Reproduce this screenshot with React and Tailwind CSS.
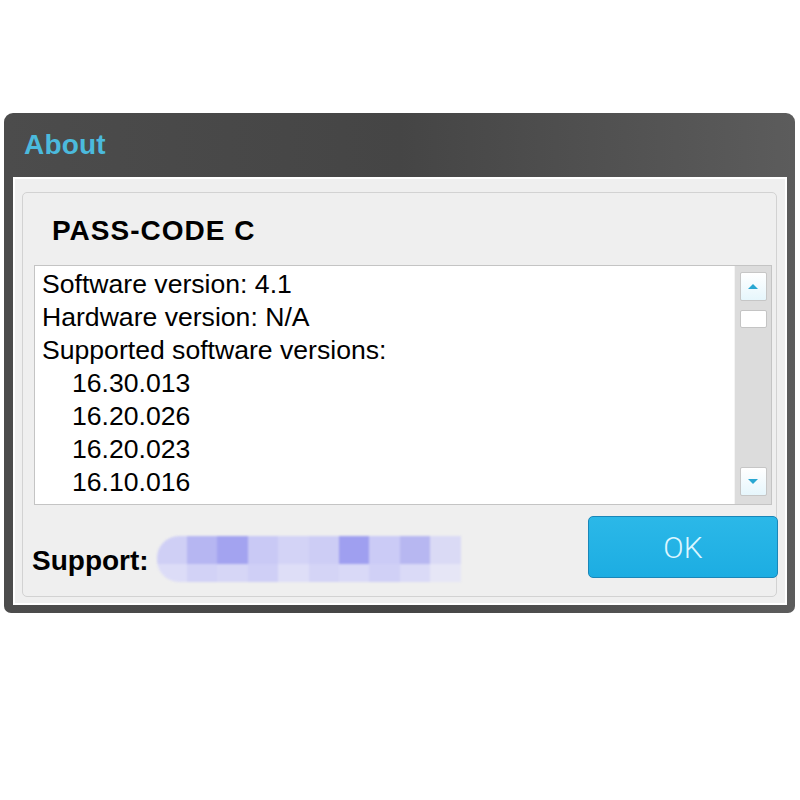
import React from "react";

// 列表里的文字行
const LINES = [
  { text: "Software version: 4.1", indent: false },
  { text: "Hardware version: N/A", indent: false },
  { text: "Supported software versions:", indent: false },
  { text: "16.30.013", indent: true },
  { text: "16.20.026", indent: true },
  { text: "16.20.023", indent: true },
  { text: "16.10.016", indent: true },
];

// 打了马赛克的联系方式
const BLUR_TOP = ["#cfcff5", "#b6b6f2", "#a3a3f0", "#c9c9f5", "#d3d3f6", "#cdcdf5", "#9f9ff0", "#cbcbf6", "#b7b7f1", "#dadaf5"];
const BLUR_BOTTOM = ["#dcdcf7", "#d2d2f6", "#d6d6f6", "#cfcff6", "#dedef7", "#d4d4f6", "#d9d9f7", "#d0d0f6", "#dadaf7", "#e6e6f6"];

const SANS = "font-['Liberation_Sans',Arial,sans-serif]";

function ScrollButton({ down }) {
  return (
    <div className="mx-auto w-[27px] h-[29px] bg-gradient-to-b from-white to-[#e6f6fc] border border-[#c6c6c6] rounded-[2px] flex items-center justify-center">
      <svg width="12" height="7" viewBox="0 0 12 7">
        {down ? (
          <path d="M1 1 L11 1 L6 6 Z" fill="#29a7d2" />
        ) : (
          <path d="M1 6 L11 6 L6 1 Z" fill="#29a7d2" />
        )}
      </svg>
    </div>
  );
}

export default function App() {
  return (
    <div className={`min-h-[800px] bg-white pt-[113px] pl-[4px] ${SANS}`}>
      {/* 窗口外框 */}
      <div className="w-[791px] rounded-t-[9px] rounded-b-[7px] bg-gradient-to-r from-[#4c4c4c] via-[#454545] to-[#5c5c5c] pl-[9px] pr-[8px] pb-[8px]">
        {/* 标题栏 */}
        <div className="h-[64px] flex items-center pl-[11px]">
          <span className="text-[28px] font-bold text-[#4bbadd] tracking-[0.2px]">About</span>
        </div>

        {/* 内容区 */}
        <div className="h-[428px] bg-[#efefef] border-2 border-white pl-[7px] pr-[8px] pt-[13px] pb-[6px]">
          <div className="h-full border border-[#d2d2d2] rounded-[5px] flex flex-col">
            {/* 标题 */}
            <div className="h-[72px] flex items-center pl-[29px]">
              <span className="text-[28px] font-bold text-black tracking-[1px] pt-[4px]">PASS-CODE C</span>
            </div>

            {/* 信息列表 */}
            <div className="ml-[11px] mr-[4px] h-[240px] bg-white border border-[#c4c4c4] flex">
              <div className="flex-1 pl-[7px] pt-[2px]">
                {LINES.map((l) => (
                  <div
                    key={l.text}
                    className={`text-[26.6px] leading-[33px] text-black ${l.indent ? "pl-[30px]" : ""}`}
                  >
                    {l.text}
                  </div>
                ))}
              </div>
              {/* 滚动条 */}
              <div className="w-[37px] bg-[#dcdcdc] border-l border-[#f4f4f4] flex flex-col pt-[6px] pb-[8px]">
                <ScrollButton />
                <div className="mx-auto mt-[9px] w-[27px] h-[18px] bg-white border border-[#c4c4c4] rounded-[2px]" />
                <div className="flex-1" />
                <ScrollButton down />
              </div>
            </div>

            {/* 底部 */}
            <div className="flex-1 flex items-start pl-[9px]">
              <span className="mt-[35px] text-[28px] font-bold text-black">Support:</span>
              <div className="mt-[31px] ml-[8px] w-[304px] h-[46px] rounded-l-[22px] overflow-hidden flex flex-col blur-[1px]">
                <div className="h-[28px] flex">
                  {BLUR_TOP.map((c, i) => (
                    <div key={i} className="flex-1" style={{ backgroundColor: c }} />
                  ))}
                </div>
                <div className="flex-1 flex">
                  {BLUR_BOTTOM.map((c, i) => (
                    <div key={i} className="flex-1" style={{ backgroundColor: c }} />
                  ))}
                </div>
              </div>
              <div className="flex-1" />
              <button className="mt-[11px] w-[190px] h-[62px] -mr-[2px] rounded-[5px] border border-[#1a86b8] bg-gradient-to-b from-[#2bb8e8] to-[#1cade2] flex items-center justify-center">
                <span className="font-['Roboto',sans-serif] font-light text-[30px] text-[#dcf6ff]">OK</span>
              </button>
            </div>
          </div>
        </div>
      </div>
    </div>
  );
}
